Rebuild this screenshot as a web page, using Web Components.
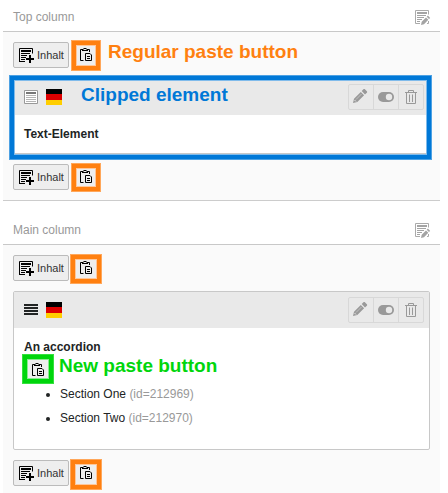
<!DOCTYPE html>
<html lang="de">
<head>
<meta charset="utf-8">
<title>Page module</title>
<style>
body{margin:0;background:#fff;font:12px/18px "Liberation Sans",Arial,sans-serif;color:#212424}
page-layout{width:437px;height:493px;margin-left:3px;overflow:hidden}
</style>
</head>
<body>
<page-layout>
<page-column label="Top column" style="--head:31px;--body:168px">
<paste-row note="Regular paste button" style="--my:-2px;--w:30px;--h:31px"></paste-row>
<content-card icon="text" note="Clipped element" marked style="--top:10px;--height:76px;--headh:37px">
<b>Text-Element</b>
</content-card>
<paste-row style="--top:10px;--my:-1px;--w:30px;--h:29px"></paste-row>
</page-column>
<page-column label="Main column" style="--head:43px;--body:248px">
<paste-row style="--my:-1px;--mx:-1px;--w:32px;--h:30px"></paste-row>
<content-card icon="lines" style="--top:10px;--height:159px;--headh:37px">
<b>An accordion</b>
<section-list></section-list>
</content-card>
<paste-row style="--top:10px;--my:-1px;--mx:-1px;--w:32px;--h:31px"></paste-row>
</page-column>
</page-layout>
<script>
const icons = {
add:'<path d="M.5 13.5V.5h13v5" fill="none" stroke="#000"/><path d="M2 2h10v2H2zM2 5h9v1H2zM2 7h6v1H2zM2 9h5v1H2zM2 11h4v1H2zM0 13h6v1H0z"/><path d="M10 7h2v3h3v2h-3v3h-2v-3H7v-2h3z"/>',
paste:'<path d="M4.5 12.5h-3v-11h2M8.5 1.5h2V4" fill="none" stroke="#000"/><path d="M3 1h1.5V0h3v1H9v2H3z"/><path d="M4.5 1h3v1h-3z" fill="#eee"/><path d="M6.5 5.5h4.5l1.5 1.5v5.500h-6z" fill="#eee" stroke="#000"/><path d="M8 8h3v1H8zM8 10h3v1H8z"/>',
edit:'<path d="M5 13.500H.5V.5h13v4M13.500 11v2.500H12" fill="none" stroke="#aaa"/><path d="M2 2h10v2H2zM2 5h9v1H2zM2 7h7v1H2zM2 9h5v1H2zM2 11h3v1H2z" fill="#a4a4a4"/><path d="m6 15 .7-3.200 4.300-4.300 2.300 2.300L9 14.200zM11.700 6.800l1.200-1.200 2.300 2.300-1.200 1.200z" fill="#a4a4a4"/>',
pencil:'<path d="m0 14 1-4.300 6.800-6.700 3.300 3.300-6.800 6.700zM8.700 2.100l2-2h1l2.400 2.400v1L12 5.400z" fill="#999"/><path d="m3 10.500 5.500-5.500" stroke="#c2c2c2"/><path d="m1.500 11 1.500 1.500" stroke="#e9e9e9"/>',
toggle:'<rect y="3" width="16" height="10" rx="5" fill="#999"/><circle cx="11" cy="8" r="3.2" fill="#e9e9e9"/>',
trash:'<path d="M0 2.500h12M3.500 2V.5h5V2M1.500 3v10.500h9V3M4.500 4.500v7.500M7.500 4.500v7.500" fill="none" stroke="#999"/>',
text:'<path d="M.5.5h13v13H.5z" fill="#fff" stroke="#999"/><path d="M2 2h10v2H2z" fill="#777"/><path d="M2 5.500h10M2 7.500h10M2 9.500h10M2 11.500h10" stroke="#b4b4b4"/>',
lines:'<path d="M0 1h14v2H0zM0 4h14v2H0zM0 7h14v2H0zM0 10h14v2H0z" fill="#212424"/>',
flag:'<path d="M0 0h16v6H0z"/><path d="M0 5h16v6H0z" fill="#d00"/><path d="M0 11h16v5H0z" fill="#ffce00"/>'
};
function define(name, render) {
  customElements.define(name, class extends HTMLElement {
    connectedCallback() {
      if (this.shadowRoot) return;
      this.attachShadow({mode:'open'}).innerHTML = render(this);
    }
  });
}
define('ui-icon', e => `<style>:host{display:block;width:16px;height:16px;flex:none}svg{display:block}</style><svg width="16" height="16">${icons[e.getAttribute('name')]}</svg>`);
define('page-layout', () => `<style>:host{display:block}</style><slot></slot>`);
define('page-column', e => `<style>
:host{display:block}
header{box-sizing:border-box;height:calc(var(--head) + 1px);padding:0 9px 5px 10px;border-bottom:1px solid #c8c8c8;display:flex;align-items:flex-end;justify-content:space-between;color:#999}
section{box-sizing:border-box;height:calc(var(--body) + 1px);padding:10px;background:#fafafa;border-bottom:1px solid #ccc}
</style><header><span>${e.getAttribute('label')}</span><ui-icon name="edit"></ui-icon></header><section><slot></slot></section>`);
define('paste-button', () => `<style>
:host{box-sizing:border-box;display:block;width:var(--w,30px);height:var(--h,30px);border:1px solid var(--rim,#ffa75a);background:#eee;padding:calc(5px - var(--my,-3px)) 0 0 calc(7px - var(--mx,0px));flex:none;box-shadow:inset 0 0 0 4px var(--tone,#ff8010),inset 0 0 0 5px var(--edge,#ffc79a)}
</style><ui-icon name="paste"></ui-icon>`);
define('big-note', () => `<style>:host{display:block;font:bold 19px/22px "Liberation Sans",Arial,sans-serif;color:var(--tone,#ff8010);white-space:nowrap}</style><slot></slot>`);
define('paste-row', e => `<style>
:host{display:flex;height:26px;margin-top:var(--top,0)}
.new{box-sizing:border-box;width:56px;height:26px;border:1px solid #bbb;border-radius:2px;background:#eee;display:flex;padding:5px 0 0 5px;font-size:11px;line-height:15px;color:#333}
.new span{margin:0 0 0 2px}
paste-button{margin:var(--my) 0 0 calc(2px + var(--mx,0px))}
big-note{margin:-1px 0 0 7px}
</style><div class="new"><ui-icon name="add"></ui-icon><span>Inhalt</span></div><paste-button></paste-button>${e.hasAttribute('note') ? `<big-note>${e.getAttribute('note')}</big-note>` : ''}`);
define('tool-group', () => `<style>
:host{box-sizing:border-box;display:flex;width:76px;height:26px;border:1px solid #d8d8d8;border-radius:2px}
div{box-sizing:border-box;width:25px;padding:4px 0 0 4px;border-right:1px solid #d8d8d8}
div:first-child{padding:5px 0 0 5px}
div:last-child{border:0;width:24px;padding:5px 0 0 6px}
</style><div><ui-icon name="pencil"></ui-icon></div><div><ui-icon name="toggle"></ui-icon></div><div><ui-icon name="trash"></ui-icon></div>`);
define('content-card', e => `<style>
:host{box-sizing:border-box;display:block;position:relative;width:417px;height:var(--height);margin-top:var(--top);border:1px solid #c8c8c8;border-radius:2px;background:#fff}
header{box-sizing:border-box;height:calc(var(--headh) - 1px);background:#e9e9e9;display:flex;padding:5px 5px 0 10px}
header>ui-icon{margin-top:6px}
ui-icon[name=flag]{margin:5px 0 0 6px}
big-note{--tone:#0078d7;margin:0 0 0 19px}
tool-group{margin-left:auto}
.body{padding:10px}
.mark{position:absolute;box-sizing:border-box;left:-5px;top:-4px;width:423px;height:85px;border:1px solid #4da1e3;box-shadow:inset 0 0 0 4px #0078d7,inset 0 0 0 5px #80bbeb}
</style><header><ui-icon name="${e.getAttribute('icon')}"></ui-icon><ui-icon name="flag"></ui-icon>${e.hasAttribute('note') ? `<big-note>${e.getAttribute('note')}</big-note>` : ''}<tool-group></tool-group></header><div class="body"><slot></slot></div>${e.hasAttribute('marked') ? '<div class="mark"></div>' : ''}`);
define('section-list', () => `<style>
:host{display:block}
.paste{display:flex;height:28px;margin:-2px 0 0 -2px;--tone:#00d60c;--edge:#8aea90;--rim:#35e03e;--w:32px;--my:-3px;--mx:-1px}
big-note{margin:1px 0 0 5px}
ul{margin:0;padding:0 0 0 36px}
li{height:24px;line-height:24px}
span{color:#999}
</style><div class="paste"><paste-button></paste-button><big-note>New paste button</big-note></div><ul><li>Section One <span>(id=212969)</span></li><li>Section Two <span>(id=212970)</span></li></ul>`);
</script>
</body>
</html>
